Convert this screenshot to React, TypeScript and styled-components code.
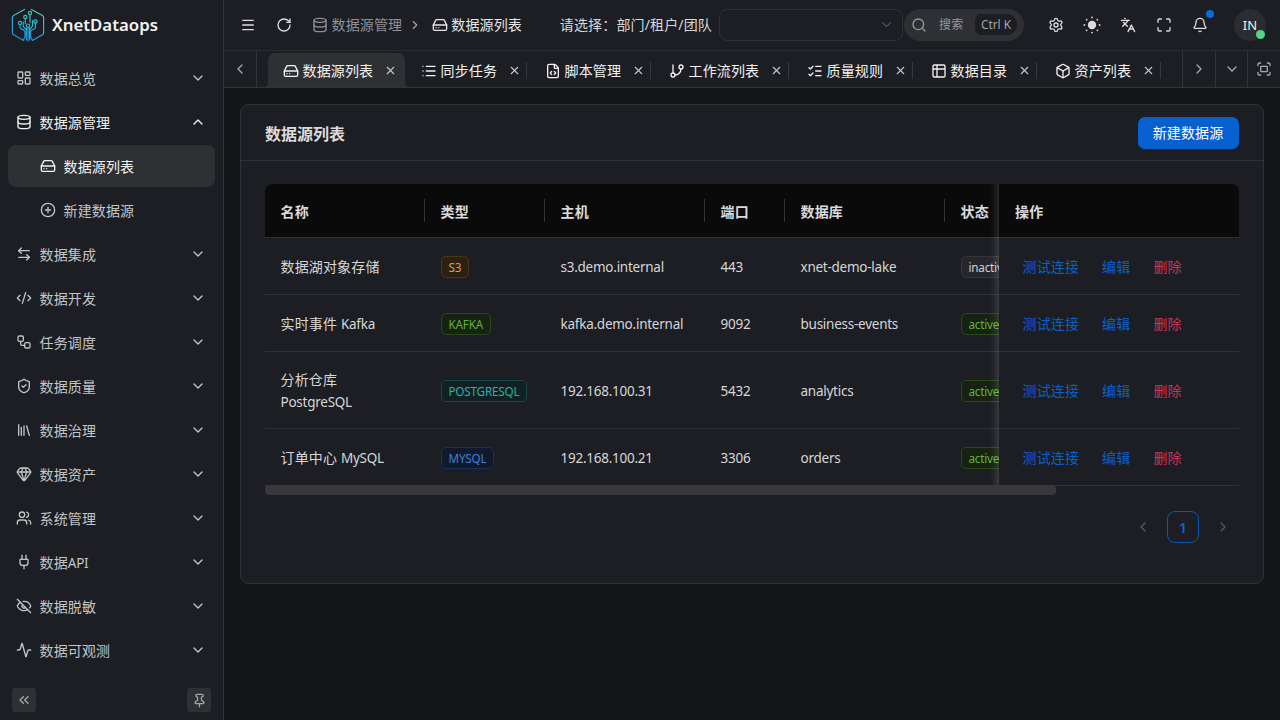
import React from 'react';
import styled, { createGlobalStyle, css } from 'styled-components';
import {
  Activity, ArrowLeftRight, Bell, Box, ChevronDown, ChevronLeft, ChevronRight, ChevronsLeft, ChevronUp,
  CirclePlus, CodeXml, Database, EyeOff, FileCode, Fullscreen, Gem, GitBranch, HardDrive, Languages,
  LayoutDashboard, Library, List, ListChecks, Maximize, Menu, Pin, Plug, RotateCw, Search, Settings,
  ShieldCheck, Table2, Users, Workflow, X,
} from 'lucide-react';
import type { LucideIcon } from 'lucide-react';

const c = {
  deep: '#141518',
  bg: '#1c1e23',
  border: '#333438',
  accent: '#2e3033',
  text: '#e6e6e7',
  primary: '#0a5fcb',
  danger: '#cc3356',
};

const GlobalStyle = createGlobalStyle`
  * { box-sizing: border-box; }
  body {
    margin: 0;
    background: ${c.deep};
    color: ${c.text};
    font: 14px/22px "Noto Sans", "Noto Sans CJK SC", sans-serif;
    letter-spacing: 0.15px;
    overflow: hidden;
  }
  svg { display: block; flex: none; }
`;

const Latin = styled.span`
  font-size: 13.5px;
  letter-spacing: -0.25px;
`;

const Shell = styled.div`
  display: grid;
  grid-template-columns: 224px 1fr;
  width: 1280px;
  height: 720px;
`;

/* Sidebar */
const Sidebar = styled.aside`
  display: flex;
  flex-direction: column;
  background: ${c.bg};
  border-right: 1px solid ${c.border};
`;

const Brand = styled.div`
  display: flex;
  align-items: center;
  gap: 7px;
  height: 50px;
  padding-left: 11px;
  font-size: 16.8px;
  font-weight: 600;
  letter-spacing: 0;
  color: #f2f2f2;
`;

const Nav = styled.nav`
  flex: 1;
  display: flex;
  flex-direction: column;
  gap: 2px;
  padding: 7px 8px 0;
`;

const NavItem = styled.div<{ $child?: boolean; $selected?: boolean; $open?: boolean }>`
  display: flex;
  align-items: center;
  gap: 7.5px;
  height: 42px;
  padding: 0 9.5px 0 ${(p) => (p.$child ? 32 : 8)}px;
  border-radius: 8px;
  color: ${(p) => (p.$selected || p.$open ? '#f2f2f2' : '#c3c4c6')};
  background: ${(p) => (p.$selected ? c.accent : 'transparent')};
`;

const NavLabel = styled.span`
  flex: 1;
  padding-top: 2px;
`;

const SideFoot = styled.div`
  display: flex;
  justify-content: space-between;
  padding: 0 12px 8px;
`;

const FootButton = styled.button`
  display: grid;
  place-items: center;
  width: 24px;
  height: 24px;
  padding: 0;
  border: 0;
  border-radius: 3px;
  background: ${c.accent};
  color: #a5a6aa;
`;

/* Header */
const Main = styled.div`
  display: flex;
  flex-direction: column;
  min-width: 0;
`;

const Header = styled.header`
  display: flex;
  align-items: center;
  height: 51px;
  padding: 0 14px 1px 8px;
  background: ${c.bg};
  border-bottom: 1px solid #2b2c31;
`;

const IconButton = styled.div<{ $mr?: number }>`
  position: relative;
  display: grid;
  place-items: center;
  width: 32px;
  height: 32px;
  margin-right: ${(p) => p.$mr ?? 4}px;
  color: #dcdcde;
`;

const Crumb = styled.div<{ $active?: boolean }>`
  display: flex;
  align-items: center;
  gap: 3.5px;
  color: ${(p) => (p.$active ? c.text : '#8f9097')};
`;

const CrumbSeparator = styled.div`
  width: 29.5px;
  padding-left: 5.5px;
  color: #a3a4a9;
`;

const ScopeLabel = styled.div`
  margin-left: auto;
  margin-right: 7px;
  color: #d8d8da;
  white-space: nowrap;
`;

const Select = styled.div`
  display: flex;
  align-items: center;
  justify-content: flex-end;
  width: 184px;
  height: 32px;
  margin-right: 1px;
  padding-right: 7px;
  border: 1px solid #303136;
  border-radius: 8px;
  color: #55565b;
`;

const SearchBox = styled.div`
  display: flex;
  align-items: center;
  width: 120px;
  height: 32px;
  margin-right: 16px;
  padding: 0 7px;
  border-radius: 16px;
  background: ${c.accent};
  color: #96979b;
  font-size: 12px;
`;

const SearchText = styled.span`
  flex: 1;
  padding: 1px 0 0 12px;
`;

const Shortcut = styled.kbd`
  width: 42px;
  height: 21px;
  border-radius: 6px 10px 10px 6px;
  background: ${c.bg};
  color: #a3a4a9;
  font: 11.8px/21px "Noto Sans", sans-serif;
  letter-spacing: 0;
  text-align: center;
`;

const Notice = styled.i`
  position: absolute;
  top: 1px;
  right: 2px;
  width: 8px;
  height: 8px;
  border-radius: 50%;
  background: #006be6;
`;

const Avatar = styled.div`
  position: relative;
  width: 32px;
  height: 32px;
  margin-left: 14px;
  border-radius: 50%;
  background: #2b2c30;
  color: #f0f0f0;
  font-size: 13px;
  letter-spacing: 0;
  line-height: 32px;
  text-align: center;
`;

const Online = styled.i`
  position: absolute;
  right: 1px;
  bottom: 2px;
  width: 9px;
  height: 9px;
  border-radius: 50%;
  background: #57d188;
`;

/* Tabs */
const TabBar = styled.div`
  display: flex;
  height: 37px;
  background: ${c.bg};
  border-bottom: 1px solid ${c.border};
`;

const TabTool = styled.div<{ $side: 'left' | 'right' }>`
  display: grid;
  place-items: center;
  width: ${(p) => (p.$side === 'left' ? 33 : 32.67)}px;
  color: #a6a7ab;
  ${(p) => (p.$side === 'left'
    ? css`border-right: 1px solid ${c.border};`
    : css`border-left: 1px solid ${c.border};`)}
`;

const TabList = styled.div`
  display: flex;
  flex: 1;
  padding: 2px 0 0 8px;
  min-width: 0;
`;

const Tab = styled.div<{ $active?: boolean; $wide?: boolean }>`
  position: relative;
  display: flex;
  align-items: center;
  gap: 3.5px;
  width: ${(p) => (p.$wide ? 138 : 124)}px;
  padding: 1px 6.5px 0 18px;
  color: #f2f2f2;
  white-space: nowrap;
  > * { position: relative; }
  > svg:last-child { margin-left: auto; color: #c9cacc; }
  ${(p) => (p.$active
    ? css`
      &::before {
        content: '';
        position: absolute;
        inset: 0 -2px 0 3px;
        border-radius: 7px 7px 0 0;
        background: ${c.accent};
      }
      &::after {
        content: '';
        position: absolute;
        inset: auto -5px 0 0;
        height: 3px;
        background:
          radial-gradient(circle at 0 0, transparent 2.5px, ${c.accent} 3px) 0 0 / 3px 3px no-repeat,
          radial-gradient(circle at 100% 0, transparent 2.5px, ${c.accent} 3px) 100% 0 / 3px 3px no-repeat;
      }`
    : css`
      &::after {
        content: '';
        position: absolute;
        right: 0;
        top: 9px;
        height: 17px;
        border-right: 1px solid #36373c;
      }`)}
`;

/* Card */
const Content = styled.main`
  flex: 1;
  padding: 16px;
`;

const Card = styled.section`
  height: 480px;
  background: ${c.bg};
  border: 1px solid #313237;
  border-radius: 9px;
`;

const CardHead = styled.div`
  display: flex;
  align-items: center;
  justify-content: space-between;
  height: 56px;
  padding: 0 24px;
  border-bottom: 1px solid #313237;
`;

const CardTitle = styled.h2`
  margin: 0;
  padding-top: 2px;
  font-size: 16px;
  font-weight: 700;
  letter-spacing: 0;
  color: #dcdcdd;
`;

const PrimaryButton = styled.button`
  width: 101px;
  height: 32px;
  padding: 0 1px 2px 0;
  margin-top: 1px;
  border: 0;
  border-radius: 7px;
  background: #0660cf;
  color: #fff;
  font: 14px "Noto Sans CJK SC", sans-serif;
  letter-spacing: 0.15px;
  box-shadow: 0 1px 1px rgba(4, 60, 130, 0.5);
`;

const CardBody = styled.div`
  padding: 23px 24px 0;
`;

/* Table */
const TableFrame = styled.div`
  display: grid;
  grid-template-columns: 734px 240px;
  border-radius: 8px 8px 0 0;
  overflow: hidden;
`;

const Scrolled = styled.div`
  position: relative;
  overflow: hidden;
  &::after {
    content: '';
    position: absolute;
    inset: 0 0 0 auto;
    width: 30px;
    box-shadow: inset -10px 0 8px -8px rgba(240, 240, 253, 0.2);
  }
`;

const Row = styled.div<{ $tall?: boolean }>`
  display: grid;
  grid-template-columns: 160px 120px 160px 80px 160px 120px;
  align-items: center;
  height: ${(p) => (p.$tall ? 77 : 57)}px;
  padding-top: 2px;
  border-bottom: 1px solid #313237;
  color: #d6d6d8;
`;

const headCell = css`
  height: 54px;
  background: #0a0a0b;
  font-weight: 700;
  color: #dadadb;
`;

const HeadRow = styled(Row)`
  ${headCell}
  padding-top: 0;
`;

const Cell = styled.div`
  padding: 0 16px 0 15.5px;
`;

const HeadCell = styled(Cell)`
  height: 23px;
  padding-top: 2px;
  border-right: 1px solid #313237;
`;

const Actions = styled.div<{ $tall?: boolean }>`
  display: flex;
  align-items: center;
  gap: 23px;
  height: ${(p) => (p.$tall ? 77 : 57)}px;
  padding: 2px 0 0 23.5px;
  border-bottom: 1px solid #313237;
`;

const ActionsHead = styled(Actions)`
  ${headCell}
  padding-left: 16px;
`;

const Link = styled.a<{ $danger?: boolean }>`
  color: ${(p) => (p.$danger ? c.danger : c.primary)};
`;

const tones = {
  gold: ['#2b2111', '#4b3713', '#dba827'],
  green: ['#162312', '#274916', '#62b236'],
  cyan: ['#112123', '#144848', '#2cb0a8'],
  blue: ['#111a2c', '#15325b', '#3c80dc'],
  plain: ['#26272c', '#35363b', '#d0d0d2'],
} as const;

const Tag = styled.span<{ $tone: keyof typeof tones }>`
  display: block;
  width: max-content;
  height: 22px;
  padding: 0 7px 0 6.5px;
  margin-left: 0.5px;
  border: 1px solid ${(p) => tones[p.$tone][1]};
  border-radius: 5px;
  background: ${(p) => tones[p.$tone][0]};
  color: ${(p) => tones[p.$tone][2]};
  font-size: 11.7px;
  letter-spacing: -0.2px;
  line-height: 20px;
  white-space: nowrap;
`;

const ScrollThumb = styled.div`
  width: 791px;
  height: 10px;
  margin-top: -1px;
  position: relative;
  border-radius: 4px;
  background: #38383c;
`;

const Pagination = styled.div`
  display: flex;
  justify-content: flex-end;
  gap: 8px;
  padding-top: 16px;
`;

const PageButton = styled.div<{ $current?: boolean }>`
  display: grid;
  place-items: center;
  width: 32px;
  height: 32px;
  padding-top: ${(p) => (p.$current ? 1 : 0)}px;
  border: 1px solid ${(p) => (p.$current ? '#0a58b8' : 'transparent')};
  border-radius: 8px;
  color: ${(p) => (p.$current ? '#0b62cf' : '#56575b')};
  font-size: 14px;
  font-weight: 600;
`;

function Logo() {
  return (
    <svg width="34" height="34" viewBox="0 0 34 34" fill="none" stroke="url(#brand)" strokeWidth="1.2" strokeLinecap="round">
      <defs>
        <linearGradient id="brand" x1="24" y1="0" x2="10" y2="34" gradientUnits="userSpaceOnUse">
          <stop offset="0" stopColor="#43d3b4" />
          <stop offset="0.5" stopColor="#2ab0d4" />
          <stop offset="1" stopColor="#2389d8" />
        </linearGradient>
      </defs>
      <path d="M13.500 1.400 2.600 7.600Q1.400 8.300 1.400 9.600v15.200q0 1.200 1.200 1.900L12.500 32.400M20.500 1.400l10.900 6.200q1.200.7 1.200 2v15.200q0 1.200-1.200 1.900L21.500 32.400" />
      <circle cx="19" cy="4.900" r="1.600" />
      <circle cx="14.300" cy="9" r="1.600" />
      <circle cx="9" cy="14.900" r="1.600" />
      <circle cx="24.500" cy="13.500" r="1.600" />
      <circle cx="17" cy="17.700" r="1.700" />
      <path d="M19 6.500v8M14.300 10.700v5M9 16.500v2.400q0 1.600 1.600 2.200l2 .8q1.400.8 1.400 2.400V28q0 2-1.800 4M24.500 15.100v3.700q0 1.600-1.300 2.200l-2 .8q-1.600.8-1.600 2.400V28q0 2 1.800 4M17 19.500V33M15.400 20v12M18.600 20v12M12.200 14v4.500l2.500 2.500M21.600 12.500v5.500l-2.500 3" />
    </svg>
  );
}

function Sun() {
  const rays = Array.from({ length: 8 }, (_, i) => (i * Math.PI) / 4);
  return (
    <svg width="18" height="18" viewBox="0 0 18 18" fill="currentColor">
      <circle cx="9" cy="9" r="4.200" />
      {rays.map((a) => (
        <circle key={a} cx={9 + 7.6 * Math.cos(a)} cy={9 + 7.6 * Math.sin(a)} r="0.900" />
      ))}
    </svg>
  );
}

interface NavEntry { icon: LucideIcon; label: React.ReactNode; child?: boolean; selected?: boolean; open?: boolean }

const nav: NavEntry[] = [
  { icon: LayoutDashboard, label: '数据总览' },
  { icon: Database, label: '数据源管理', open: true },
  { icon: HardDrive, label: '数据源列表', child: true, selected: true },
  { icon: CirclePlus, label: '新建数据源', child: true },
  { icon: ArrowLeftRight, label: '数据集成' },
  { icon: CodeXml, label: '数据开发' },
  { icon: Workflow, label: '任务调度' },
  { icon: ShieldCheck, label: '数据质量' },
  { icon: Library, label: '数据治理' },
  { icon: Gem, label: '数据资产' },
  { icon: Users, label: '系统管理' },
  { icon: Plug, label: <>数据<Latin>API</Latin></> },
  { icon: EyeOff, label: '数据脱敏' },
  { icon: Activity, label: '数据可观测' },
];

const tabs: { icon: LucideIcon; label: string }[] = [
  { icon: HardDrive, label: '数据源列表' },
  { icon: List, label: '同步任务' },
  { icon: FileCode, label: '脚本管理' },
  { icon: GitBranch, label: '工作流列表' },
  { icon: ListChecks, label: '质量规则' },
  { icon: Table2, label: '数据目录' },
  { icon: Box, label: '资产列表' },
];

interface Source {
  name: React.ReactNode; type: string; tone: keyof typeof tones; host: string; port: string; db: string;
  status: string; tall?: boolean;
}

const sources: Source[] = [
  { name: '数据湖对象存储', type: 'S3', tone: 'gold', host: 's3.demo.internal', port: '443', db: 'xnet-demo-lake', status: 'inactive' },
  { name: <>实时事件 <Latin>Kafka</Latin></>, type: 'KAFKA', tone: 'green', host: 'kafka.demo.internal', port: '9092', db: 'business-events', status: 'active' },
  { name: <>分析仓库 <Latin>PostgreSQL</Latin></>, type: 'POSTGRESQL', tone: 'cyan', host: '192.168.100.31', port: '5432', db: 'analytics', status: 'active', tall: true },
  { name: <>订单中心 <Latin>MySQL</Latin></>, type: 'MYSQL', tone: 'blue', host: '192.168.100.21', port: '3306', db: 'orders', status: 'active' },
];

export default function App() {
  return (
    <>
      <GlobalStyle />
      <Shell>
        <Sidebar>
          <Brand><Logo />XnetDataops</Brand>
          <Nav>
            {nav.map(({ icon: Icon, label, child, selected, open }, i) => (
              <NavItem key={i} $child={child} $selected={selected} $open={open}>
                <Icon size={16} />
                <NavLabel>{label}</NavLabel>
                {!child && (open ? <ChevronUp size={16} /> : <ChevronDown size={16} />)}
              </NavItem>
            ))}
          </Nav>
          <SideFoot>
            <FootButton><ChevronsLeft size={16} /></FootButton>
            <FootButton><Pin size={15} /></FootButton>
          </SideFoot>
        </Sidebar>

        <Main>
          <Header>
            <IconButton><Menu size={16} /></IconButton>
            <IconButton $mr={12}><RotateCw size={16} /></IconButton>
            <Crumb><Database size={16} />数据源管理</Crumb>
            <CrumbSeparator><ChevronRight size={14} /></CrumbSeparator>
            <Crumb $active><HardDrive size={16} />数据源列表</Crumb>
            <ScopeLabel>请选择：部门/租户/团队</ScopeLabel>
            <Select><ChevronDown size={17} strokeWidth={1.5} /></Select>
            <SearchBox>
              <Search size={16} />
              <SearchText>搜索</SearchText>
              <Shortcut>Ctrl K</Shortcut>
            </SearchBox>
            <IconButton><Settings size={16} /></IconButton>
            <IconButton><Sun /></IconButton>
            <IconButton><Languages size={16} /></IconButton>
            <IconButton><Maximize size={16} /></IconButton>
            <IconButton><Bell size={16} /><Notice /></IconButton>
            <Avatar>IN<Online /></Avatar>
          </Header>

          <TabBar>
            <TabTool $side="left"><ChevronLeft size={16} /></TabTool>
            <TabList>
              {tabs.map(({ icon: Icon, label }, i) => (
                <Tab key={label} $active={i === 0} $wide={label.length > 4}>
                  <Icon size={16} />
                  <span>{label}</span>
                  <X size={13} />
                </Tab>
              ))}
            </TabList>
            <TabTool $side="right"><ChevronRight size={16} /></TabTool>
            <TabTool $side="right"><ChevronDown size={16} /></TabTool>
            <TabTool $side="right"><Fullscreen size={16} /></TabTool>
          </TabBar>

          <Content>
            <Card>
              <CardHead>
                <CardTitle>数据源列表</CardTitle>
                <PrimaryButton>新建数据源</PrimaryButton>
              </CardHead>
              <CardBody>
                <TableFrame>
                  <Scrolled>
                    <HeadRow>
                      {['名称', '类型', '主机', '端口', '数据库', '状态'].map((h) => <HeadCell key={h}>{h}</HeadCell>)}
                    </HeadRow>
                    {sources.map((s) => (
                      <Row key={s.host} $tall={s.tall}>
                        <Cell>{s.name}</Cell>
                        <Cell><Tag $tone={s.tone}>{s.type}</Tag></Cell>
                        <Cell><Latin>{s.host}</Latin></Cell>
                        <Cell><Latin>{s.port}</Latin></Cell>
                        <Cell><Latin>{s.db}</Latin></Cell>
                        <Cell><Tag $tone={s.status === 'active' ? 'green' : 'plain'}>{s.status}</Tag></Cell>
                      </Row>
                    ))}
                  </Scrolled>
                  <div>
                    <ActionsHead>操作</ActionsHead>
                    {sources.map((s) => (
                      <Actions key={s.host} $tall={s.tall}>
                        <Link>测试连接</Link>
                        <Link>编辑</Link>
                        <Link $danger>删除</Link>
                      </Actions>
                    ))}
                  </div>
                </TableFrame>
                <ScrollThumb />
                <Pagination>
                  <PageButton><ChevronLeft size={16} /></PageButton>
                  <PageButton $current>1</PageButton>
                  <PageButton><ChevronRight size={16} /></PageButton>
                </Pagination>
              </CardBody>
            </Card>
          </Content>
        </Main>
      </Shell>
    </>
  );
}
